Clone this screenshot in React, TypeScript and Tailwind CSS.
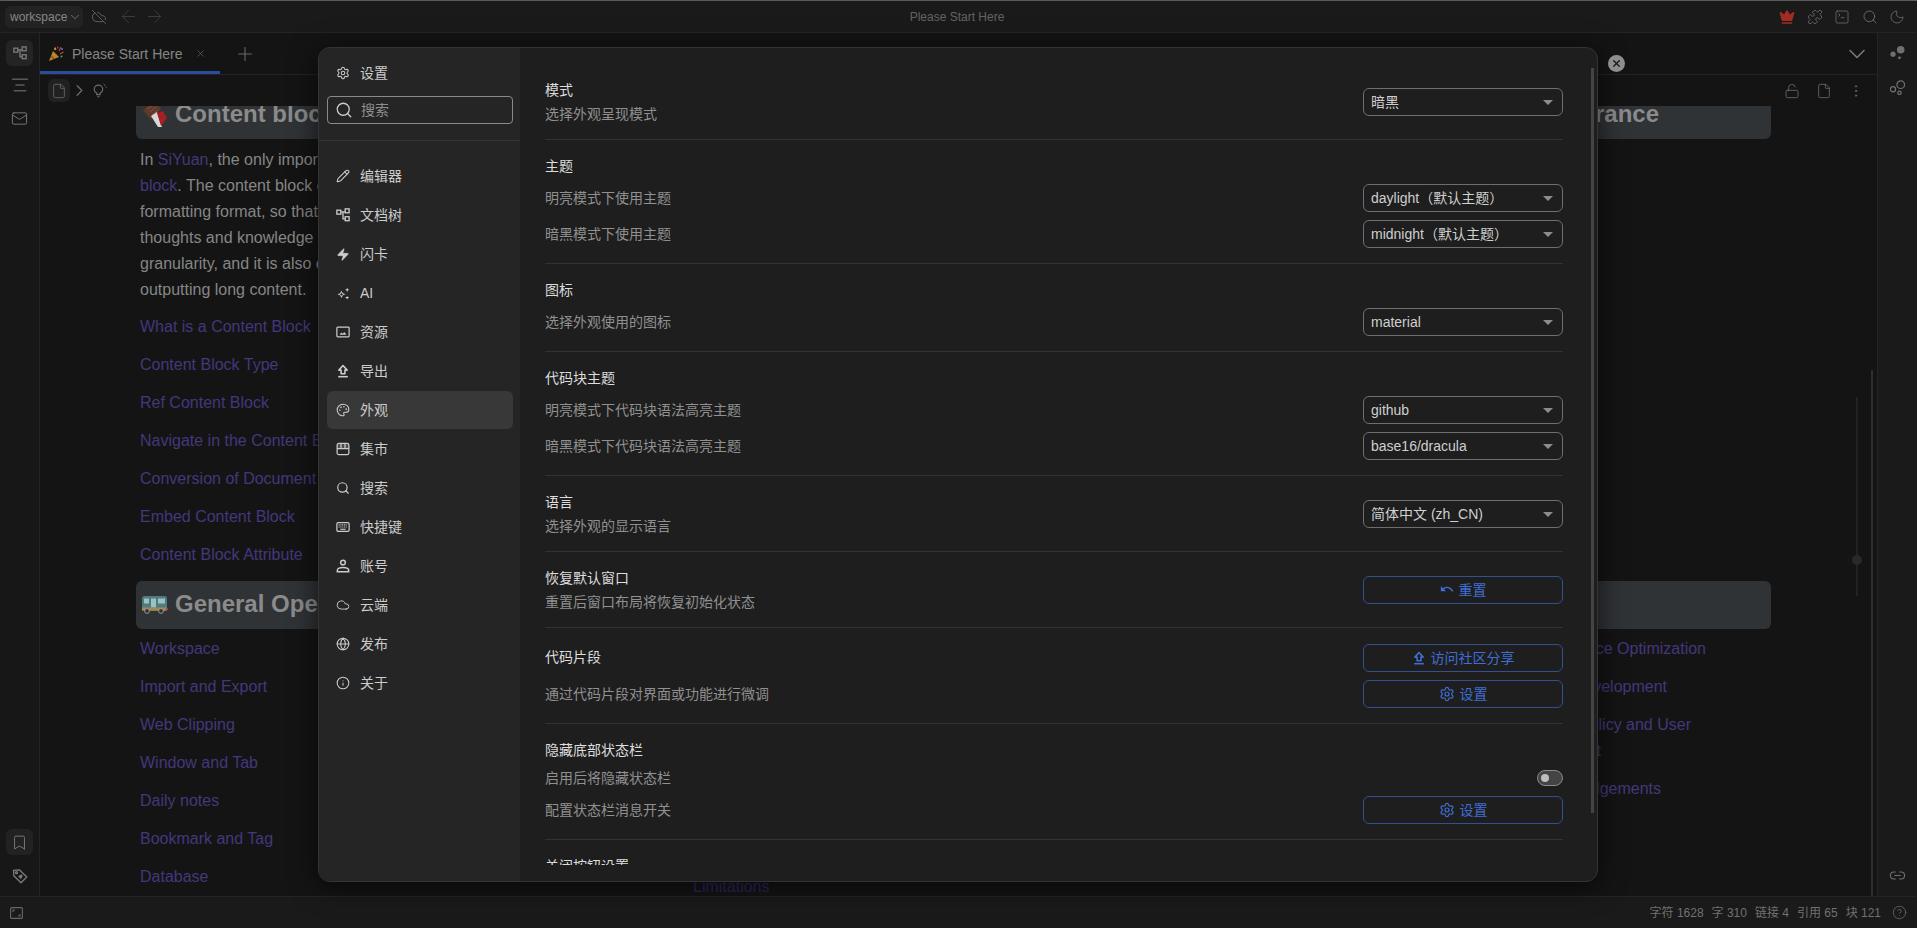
import React from "react";
import {
  Settings, Search, Pencil, Zap, Palette, Cloud, Globe, Info, CloudOff, ArrowLeft, ArrowRight,
  Crown, Puzzle, SquareTerminal, Moon, Mail, AlignCenter, Bookmark, Link2, CircleHelp,
  LockOpen, File, EllipsisVertical, ChevronDown, ChevronRight, X, Plus,
} from "lucide-react";

const Tree = ({ s = 14, c = "currentColor" }: { s?: number; c?: string }) => (
  <svg width={s} height={s} viewBox="0 0 16 16" fill="none" stroke={c} strokeWidth="1.5">
    <rect x="1" y="2.5" width="4.5" height="4.5" />
    <rect x="10.5" y="1" width="4.5" height="4.5" />
    <rect x="10.5" y="10" width="4.5" height="4.5" />
    <path d="M5.5 4.5h5M8 4.5v8h2.5" />
  </svg>
);
const Sparkle = ({ s = 14 }: { s?: number }) => (
  <svg width={s} height={s} viewBox="0 0 16 16" fill="currentColor">
    <path d="M5.500 4.500 7.200 7.800 10.500 9 7.200 10.200 5.500 13.500 3.800 10.200.5 9l3.300-1.200zM5.500 6.800l-.7 1.500-1.500.7 1.500.7.7 1.500.7-1.500 1.500-.7-1.500-.7z" fillRule="evenodd" />
    <path d="M12.500 1l.8 1.700 1.700.8-1.700.8-.8 1.700-.8-1.700-1.700-.8 1.700-.8zM12.500 11l.8 1.300 1.700.7-1.700.7-.8 1.300-.8-1.300-1.700-.7 1.700-.7z" />
  </svg>
);
const ImageIc = ({ s = 14 }: { s?: number }) => (
  <svg width={s} height={s} viewBox="0 0 16 16" fill="none" stroke="currentColor" strokeWidth="1.4">
    <rect x="1" y="2.5" width="14" height="11" rx="1" />
    <path d="M4 11l2.200-2.400 1.600 1.400 1.600-1.900L12 11z" fill="currentColor" stroke="none" />
  </svg>
);
const UploadIc = ({ s = 14 }: { s?: number }) => (
  <svg width={s} height={s} viewBox="0 0 16 16" fill="none" stroke="currentColor" strokeWidth="1.800">
    <path d="M8 1.800 12.700 7H10.200v4.200H5.800V7H3.300z" strokeLinejoin="round" />
    <path d="M2.500 14.500h11" />
  </svg>
);
const Store = ({ s = 14 }: { s?: number }) => (
  <svg width={s} height={s} viewBox="0 0 16 16" fill="none" stroke="currentColor" strokeWidth="1.4">
    <rect x="1.300" y="1.500" width="13.400" height="13" rx="2" />
    <path d="M1.300 7.500h13.400M5.700 1.500v6M10.300 1.500v6" />
    <path d="M1.300 1.500h13.400v6H1.300z" fill="currentColor" opacity=".25" stroke="none" />
  </svg>
);
const KeyboardIc = ({ s = 14 }: { s?: number }) => (
  <svg width={s} height={s} viewBox="0 0 16 16">
    <rect x="1" y="3" width="14" height="10" rx="1.500" fill="none" stroke="currentColor" strokeWidth="1.400" />
    <path d="M3 5.500h10M3 8h10" stroke="currentColor" strokeWidth="1.400" strokeDasharray="1.200 .8" />
    <path d="M5 10.600h6" stroke="currentColor" strokeWidth="1.300" />
  </svg>
);
const UserIc = ({ s = 14 }: { s?: number }) => (
  <svg width={s} height={s} viewBox="0 0 16 16" fill="none" stroke="currentColor" strokeWidth="1.700">
    <circle cx="8" cy="4" r="2.700" />
    <path d="M1.500 14.500V13c0-2 3-3.300 6.500-3.300s6.500 1.300 6.500 3.300v1.500z" />
  </svg>
);
const ReplyIc = ({ s = 14 }: { s?: number }) => (
  <svg width={s} height={s} viewBox="0 0 16 16" fill="currentColor">
    <path d="M1 3.500v6h6L4.600 7.100C6 6.100 7.300 5.700 8.600 5.900c2 .3 3.800 1.600 5.200 4.100l1.400-.8C13.500 6.300 11.300 4.600 8.800 4.300 7 4.100 5.200 4.700 3.400 5.900z" />
  </svg>
);
const Tag = ({ s = 16 }: { s?: number }) => (
  <svg width={s} height={s} viewBox="0 0 16 16" fill="none" stroke="currentColor" strokeWidth="1.300">
    <path d="M1.500 2.300 7.300 1.800 14.800 9 9 14.800 1.800 7.800z" strokeLinejoin="round" />
    <circle cx="4.500" cy="4.700" r="1" />
    <path d="M9 11.300 6.800 9c-1-1.100.6-2.500 1.700-1.400.1-1.500 2.200-1.200 2 .4z" fill="currentColor" stroke="none" />
  </svg>
);
const Bubbles = ({ filled }: { filled?: boolean }) => (
  <svg width="15" height="15" viewBox="0 0 15 15" fill={filled ? "currentColor" : "none"} stroke="currentColor" strokeWidth={filled ? 0 : 1.2}>
    <circle cx="10.700" cy="4.700" r="3.800" />
    <circle cx="3" cy="9.200" r="2.600" />
    <circle cx="9.500" cy="12.800" r={filled ? 1.400 : 1.700} />
  </svg>
);
const FrameIc = () => (
  <svg width="13" height="12" viewBox="0 0 13 12" fill="none" stroke="#666" strokeWidth="1.100">
    <rect x=".6" y=".6" width="11.800" height="10.800" rx="1" />
    <path d="M3 5V3h2M10 7v2H8" />
  </svg>
);
const Bulb = () => (
  <svg width="15" height="15" viewBox="0 0 14 14" fill="none" stroke="currentColor" strokeWidth="1.100">
    <path d="M4.500 9.500C3 8.600 2 7.400 2 6a4 4 0 0 1 8 0c0 1.400-1 2.600-2.500 3.500v1.300h-3z" />
    <path d="M5 12.800h2" />
    <path d="M12 1.500v1.200M13.800 4h-1M10.700 .6l.4.7" strokeWidth=".9" />
  </svg>
);
const Popper = () => (
  <svg width="15" height="15" viewBox="0 0 15 15">
    <path d="M0 15 4 5l6 6z" fill="#b8862a" />
    <path d="M2.500 9l3.500 3.500-2 .8-2.200-2.200z" fill="#8d5c2a" />
    <path d="M6 1l1 3M12 1l-2 4M14.500 6l-3.500 2M9 .5l-.5 2" stroke="#c0443a" strokeWidth="1.200" />
    <circle cx="13" cy="3" r="1" fill="#4a7fc0" />
    <circle cx="6" cy="3" r=".9" fill="#d0b040" />
    <circle cx="12.500" cy="10.500" r="1" fill="#5aa060" />
  </svg>
);
const Chocolate = () => (
  <svg width="24" height="26" viewBox="0 0 24 26">
    <path d="M0 9 7 3 16 5 18 8 8 19z" fill="#5e3a2c" />
    <path d="M4 8l5-3M7 11l6-5M9 14l6-5" stroke="#7d5444" strokeWidth="1" />
    <path d="M8 15 14 11 19 26 15 26z" fill="#d8d8d8" />
    <path d="M14 12 20 10 24 17 18 25z" fill="#a51f24" />
  </svg>
);
const Bus = () => (
  <svg width="27" height="19" viewBox="0 0 27 19">
    <rect x="1" y="1" width="25" height="15" rx="2.500" fill="#4f7a80" />
    <rect x="3" y="3.500" width="5" height="5" fill="#9dc0c4" />
    <rect x="10" y="3.500" width="5" height="9" fill="#9dc0c4" />
    <rect x="17" y="3.500" width="7" height="5" fill="#9dc0c4" />
    <rect x="1" y="12.500" width="25" height="3" fill="#a88848" />
    <circle cx="6" cy="16" r="2.400" fill="#333" stroke="#aaa" strokeWidth=".8" />
    <circle cx="20" cy="16" r="2.400" fill="#333" stroke="#aaa" strokeWidth=".8" />
    <rect x="25" y="13" width="2" height="2" fill="#b0413a" />
  </svg>
);

const Item = ({ icon, label, active }: { icon: React.ReactNode; label: string; active?: boolean }) => (
  <div className={`flex h-[38px] items-center gap-[10px] rounded-md pl-[9px] text-[#cccccc] ${active ? "bg-[#383838]" : ""}`}>
    <span className="flex w-[14px] shrink-0 justify-center">{icon}</span>
    <span className="text-sm">{label}</span>
  </div>
);

const Sel = ({ v }: { v: string }) => (
  <div className="flex h-[28px] w-[200px] shrink-0 items-center justify-between rounded-[6px] border border-[#6e6e6e] pl-[7px] pr-[9px] text-sm text-[#cfcfcf]">
    <span>{v}</span>
    <span className="h-0 w-0 border-x-[5px] border-t-[5px] border-x-transparent border-t-[#8c8c8c]" />
  </div>
);

const Btn = ({ icon, label }: { icon: React.ReactNode; label: string }) => (
  <div className="flex h-[28px] w-[200px] shrink-0 items-center justify-center gap-[5px] rounded-[6px] border border-[#33508f] text-sm text-[#3f6ed6]">
    {icon}
    <span>{label}</span>
  </div>
);

const T = ({ children }: { children: React.ReactNode }) => <div className="h-[22px] text-sm leading-[20px] text-[#dddddd]">{children}</div>;
const D = ({ children }: { children: React.ReactNode }) => <div className="h-[22px] text-sm leading-[22px] text-[#909090]">{children}</div>;

const SideRow = ({ title, desc, right }: { title: string; desc: string; right: React.ReactNode }) => (
  <section className="flex items-center justify-between border-b border-[#333333] pb-[14px] pt-4">
    <div>
      <T>{title}</T>
      <div className="mt-px"><D>{desc}</D></div>
    </div>
    <div className="-mt-px">{right}</div>
  </section>
);

const Row = ({ desc, right, className = "" }: { desc: string; right: React.ReactNode; className?: string }) => (
  <div className={`flex items-center justify-between ${className}`}>
    <D>{desc}</D>
    {right}
  </div>
);

const Stack = ({ title, children }: { title: string; children: React.ReactNode }) => (
  <section className="border-b border-[#333333] pb-[15px] pt-4">
    <T>{title}</T>
    {children}
  </section>
);

const L = ({ children }: { children: React.ReactNode }) => (
  <div className="mb-3 h-[26px] whitespace-nowrap text-base leading-[26px] text-[#44377c]">{children}</div>
);

const Bar = ({ children, className = "" }: { children: React.ReactNode; className?: string }) => (
  <div className={`flex h-12 items-center rounded-md bg-[#303336] pb-[2px] text-2xl font-bold text-[#8b8b8b] ${className}`}>{children}</div>
);

export default function App() {
  const gear = <Settings size={16} strokeWidth={1.800} />;
  return (
    <div className="relative flex h-[928px] w-[1917px] flex-col overflow-hidden bg-[#141414] [font-family:'Liberation_Sans','Noto_Sans_CJK_SC',sans-serif]">
      {/* top bar */}
      <header className="flex h-[33px] shrink-0 items-center border-b border-[#242424] border-t border-t-[#5c5c5c] bg-[#1a1a1a] pl-[5px] pr-[12px] text-[#707070]">
        <div className="flex h-[22px] w-[78px] shrink-0 items-center gap-[1px] rounded-md bg-[#232323] pl-[5px] text-xs text-[#868686]">
          workspace <ChevronDown size={14} strokeWidth={1.300} />
        </div>
        <CloudOff size={16} strokeWidth={1.300} className="ml-[8px] shrink-0 text-[#666]" />
        <ArrowLeft size={21} strokeWidth={1.100} className="ml-[11px] shrink-0 text-[#3d3d3d]" />
        <ArrowRight size={21} strokeWidth={1.100} className="ml-[5px] shrink-0 text-[#3d3d3d]" />
        <div className="flex-1 pr-[30px] text-center text-xs text-[#636363]">Please Start Here</div>
        <div className="flex items-center gap-[11.5px]">
          <Crown size={16} fill="#a22c22" stroke="#a22c22" />
          <Puzzle size={16} strokeWidth={1.200} />
          <SquareTerminal size={16} strokeWidth={1.200} />
          <Search size={16} strokeWidth={1.300} />
          <Moon size={16} strokeWidth={1.200} />
        </div>
      </header>

      <div className="flex min-h-0 flex-1">
        {/* left dock */}
        <aside className="flex w-10 shrink-0 flex-col items-center border-r border-[#242424] bg-[#171717] pb-[12px] pt-[7px] text-[#7c7c7c]">
          <div className="flex h-[26px] w-[27px] items-center justify-center rounded-md bg-[#242424]"><Tree s={14} /></div>
          <AlignCenter size={20} strokeWidth={1.200} className="mt-[9px] shrink-0" />
          <Mail size={17} strokeWidth={1.300} className="mt-[15px] shrink-0" />
          <div className="mt-auto flex h-[26px] w-[27px] items-center justify-center rounded-md bg-[#222222]"><Bookmark size={17} strokeWidth={1.300} /></div>
          <span className="mt-[13px] flex"><Tag s={16} /></span>
        </aside>

        {/* center */}
        <main className="flex min-w-0 flex-1 flex-col">
          <div className="flex h-[42px] shrink-0 items-stretch border-b border-[#232323] pr-[6px]">
            <div className="flex w-[180px] items-center border-b-[3px] border-[#2a4e9c] pl-[9px] pt-[3px] text-sm text-[#858585]">
              <Popper />
              <span className="ml-[8px]">Please Start Here</span>
              <X size={11} strokeWidth={1.500} className="ml-[12px] text-[#666]" />
            </div>
            <div className="flex w-[50px] items-center justify-center text-[#686868]"><Plus size={22} strokeWidth={1.200} /></div>
            <div className="ml-auto flex items-center text-[#7c7c7c]"><ChevronDown size={28} strokeWidth={1.300} /></div>
          </div>
          <div className="flex h-[31px] shrink-0 items-center pl-[8px] pr-[13px] text-[#6e6e6e]">
            <div className="flex h-[23px] w-[22px] items-center justify-center rounded-md bg-[#212121]"><File size={16} strokeWidth={1.200} /></div>
            <ChevronRight size={19} strokeWidth={1.500} />
            <span className="ml-[3px] flex"><Bulb /></span>
            <div className="ml-auto flex items-center gap-[16px]">
              <LockOpen size={16} strokeWidth={1.200} />
              <File size={16} strokeWidth={1.200} />
              <EllipsisVertical size={16} strokeWidth={1.400} />
            </div>
          </div>

          <div className="relative flex min-h-0 flex-1 overflow-hidden pl-[96px] pr-[106px]">
            {/* left column */}
            <div className="-mt-[15px] w-[557px] shrink-0">
              <Bar className="w-[540px]"><span className="ml-[7px] flex"><Chocolate /></span><span className="ml-[8px]">Content block</span></Bar>
              <div className="mb-[11px] mt-2 pl-1 text-base leading-[26px] text-[#868686]">
                <div className="whitespace-nowrap">In <span className="text-[#44377c]">SiYuan</span>, the only important concept is the content</div>
                <div className="whitespace-nowrap"><span className="text-[#44377c]">block</span>. The content block can use markdown</div>
                <div className="whitespace-nowrap">formatting format, so that we can record</div>
                <div className="whitespace-nowrap">thoughts and knowledge in blocks at a fine</div>
                <div className="whitespace-nowrap">granularity, and it is also convenient for</div>
                <div className="whitespace-nowrap">outputting long content.</div>
              </div>
              <div className="pl-1">
                <L>What is a Content Block</L>
                <L>Content Block Type</L>
                <L>Ref Content Block</L>
                <L>Navigate in the Content Block</L>
                <L>Conversion of Document</L>
                <L>Embed Content Block</L>
                <L>Content Block Attribute</L>
              </div>
              <Bar className="mb-[7px] mt-[13px] w-[540px]"><span className="ml-[5px] flex"><Bus /></span><span className="ml-[7px]">General Operations</span></Bar>
              <div className="pl-1">
                <L>Workspace</L>
                <L>Import and Export</L>
                <L>Web Clipping</L>
                <L>Window and Tab</L>
                <L>Daily notes</L>
                <L>Bookmark and Tag</L>
                <L>Database</L>
              </div>
            </div>
            {/* middle column */}
            <div className="-mb-1 flex w-[500px] shrink-0 flex-col justify-end">
              <div className="h-[26px] text-base leading-[26px] text-[#2d2560]">Limitations</div>
            </div>
            {/* right column */}
            <div className="-mt-[15px] min-w-0 flex-1">
              <Bar className="justify-end pr-[112px]">Appearance</Bar>
              <div className="h-[442px]" />
              <Bar className="justify-end pr-[190px]">Advanced</Bar>
              <div className="mt-[7px] text-right text-base leading-[26px] text-[#44377c]">
                <div className="mb-3 pr-[65px]">Performance Optimization</div>
                <div className="mb-3 pr-[104px]">Development</div>
                <div className="pr-[80px]">Privacy Policy and User</div>
                <div className="mb-3 pr-[170px]">Agreement</div>
                <div className="pr-[110px]">Acknowledgements</div>
              </div>
            </div>
            {/* doc scroll indicators */}
            <div className="absolute right-[4px] top-[264px] h-[600px] w-[2px] bg-[#2e2e2e]" />
            <div className="absolute right-[19px] top-[291px] h-[199px] w-[2px] bg-[#222222]" />
            <div className="absolute right-[15px] top-[449px] h-[10px] w-[10px] rounded-full bg-[#292929]" />
          </div>
        </main>

        {/* right dock */}
        <aside className="flex w-10 shrink-0 flex-col items-center border-l border-[#242424] bg-[#1a1a1a] pb-[12px] pt-[12px] text-[#707070]">
          <span className="flex"><Bubbles filled /></span>
          <span className="mt-[20px] flex"><Bubbles /></span>
          <Link2 size={17} strokeWidth={1.500} className="mt-auto shrink-0" />
        </aside>
      </div>

      {/* status bar */}
      <footer className="flex h-[32px] shrink-0 items-center border-t border-[#242424] bg-[#1a1a1a] pl-[10px] pr-[10px] text-xs text-[#717171]">
        <FrameIc />
        <div className="ml-auto flex items-center gap-[8px]">
          <span>字符 1628</span><span>字 310</span><span>链接 4</span><span>引用 65</span><span>块 121</span>
        </div>
        <CircleHelp size={15} strokeWidth={1.200} className="ml-[11px]" />
      </footer>

      {/* settings dialog */}
      <div className="absolute left-[318px] top-[47px] flex h-[835px] w-[1280px] overflow-hidden rounded-xl border border-[#343434] bg-[#1e1e1e] shadow-[0_4px_28px_rgba(0,0,0,0.65)]">
        <nav className="w-[201px] shrink-0 bg-[#252525] text-[#cccccc]">
          <div className="border-b border-[#333333] pb-4 pl-2 pr-[7px] pt-[6px]">
            <Item icon={gear} label="设置" />
            <div className="mt-[4px] flex h-[28px] items-center gap-[8px] rounded border border-[#8a8a8a] pl-[7px] text-sm text-[#8f8f8f]">
              <Search size={18} strokeWidth={1.700} className="text-[#cccccc]" />
              <span>搜索</span>
            </div>
          </div>
          <div className="flex flex-col gap-px pl-2 pr-[7px] pt-[16px]">
            <Item icon={<Pencil size={16} strokeWidth={1.800} />} label="编辑器" />
            <Item icon={<Tree s={14} />} label="文档树" />
            <Item icon={<Zap size={15} fill="currentColor" strokeWidth={1} />} label="闪卡" />
            <Item icon={<Sparkle s={13} />} label="AI" />
            <Item icon={<ImageIc />} label="资源" />
            <Item icon={<UploadIc />} label="导出" />
            <Item active icon={<Palette size={16} strokeWidth={1.800} />} label="外观" />
            <Item icon={<Store />} label="集市" />
            <Item icon={<Search size={16} strokeWidth={2} />} label="搜索" />
            <Item icon={<KeyboardIc />} label="快捷键" />
            <Item icon={<UserIc />} label="账号" />
            <Item icon={<Cloud size={16} strokeWidth={1.600} />} label="云端" />
            <Item icon={<Globe size={16} strokeWidth={1.800} />} label="发布" />
            <Item icon={<Info size={16} strokeWidth={1.800} />} label="关于" />
          </div>
        </nav>

        <div className="relative min-w-0 flex-1 pb-[16px]">
          <div className="h-full overflow-hidden pl-[25px] pr-[34px] pt-[16px]">
            <SideRow title="模式" desc="选择外观呈现模式" right={<Sel v="暗黑" />} />
            <Stack title="主题">
              <Row className="mt-[6px]" desc="明亮模式下使用主题" right={<Sel v="daylight（默认主题）" />} />
              <Row className="mt-2" desc="暗黑模式下使用主题" right={<Sel v="midnight（默认主题）" />} />
            </Stack>
            <Stack title="图标">
              <Row className="mt-[6px]" desc="选择外观使用的图标" right={<Sel v="material" />} />
            </Stack>
            <Stack title="代码块主题">
              <Row className="mt-[6px]" desc="明亮模式下代码块语法高亮主题" right={<Sel v="github" />} />
              <Row className="mt-2" desc="暗黑模式下代码块语法高亮主题" right={<Sel v="base16/dracula" />} />
            </Stack>
            <SideRow title="语言" desc="选择外观的显示语言" right={<Sel v="简体中文 (zh_CN)" />} />
            <SideRow title="恢复默认窗口" desc="重置后窗口布局将恢复初始化状态" right={<Btn icon={<ReplyIc />} label="重置" />} />
            <section className="border-b border-[#333333] pb-[15px] pt-4">
              <div className="flex items-center justify-between">
                <T>代码片段</T>
                <Btn icon={<UploadIc />} label="访问社区分享" />
              </div>
              <Row className="mt-2" desc="通过代码片段对界面或功能进行微调" right={<Btn icon={gear} label="设置" />} />
            </section>
            <Stack title="隐藏底部状态栏">
              <Row className="mt-[5px]" desc="启用后将隐藏状态栏" right={
                <div className="flex h-[16px] w-[26px] items-center rounded-full border border-[#8a8a8a] bg-[#444444] pl-[3px]">
                  <span className="h-2 w-2 rounded-full bg-[#bdbdbd]" />
                </div>
              } />
              <Row className="mt-[7px]" desc="配置状态栏消息开关" right={<Btn icon={gear} label="设置" />} />
            </Stack>
            <Stack title="关闭按钮设置"><div className="h-[28px]" /></Stack>
          </div>
          <div className="absolute right-[3px] top-[20px] h-[745px] w-[3px] bg-[#444444]" />
        </div>
      </div>

      {/* close */}
      <div className="absolute left-[1608px] top-[55px] flex h-[17px] w-[17px] items-center justify-center rounded-full bg-[#8e8e8e] text-[#1c1c1c]">
        <X size={11} strokeWidth={3} />
      </div>
    </div>
  );
}
